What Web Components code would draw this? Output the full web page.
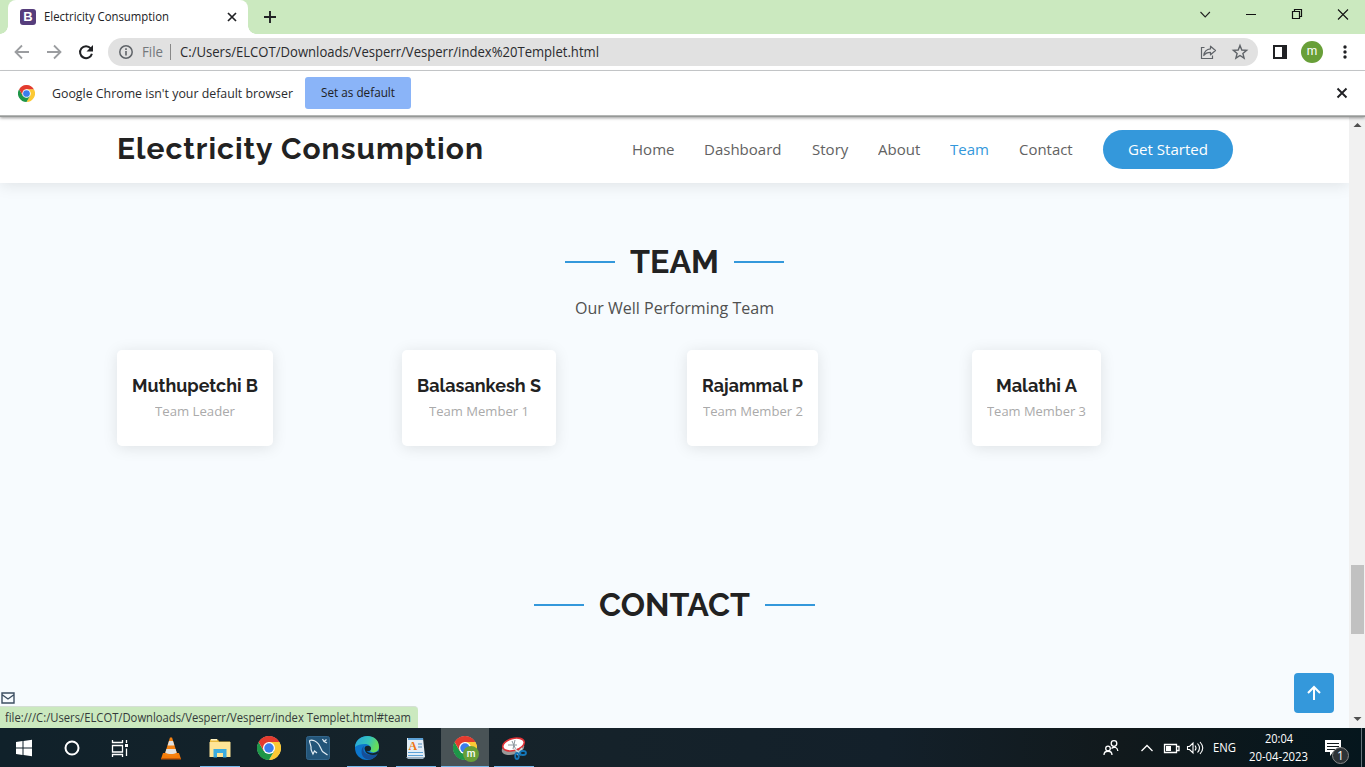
<!DOCTYPE html>
<html lang="en">
<head>
<meta charset="utf-8">
<title>Electricity Consumption</title>
<style>
html,body{margin:0;height:100%;overflow:hidden}
body{font-family:"Open Sans","Noto Sans",sans-serif;background:#f7fbfe}
</style>
</head>
<body>
<desktop-screen></desktop-screen>
<script>
const define = (name, html, ready) => {
  const t = document.createElement('template');
  t.innerHTML = html;
  customElements.define(name, class extends HTMLElement {
    constructor() {
      super();
      this.attachShadow({mode: 'open'}).appendChild(t.content.cloneNode(true));
    }
    connectedCallback() { if (ready) ready(this, this.shadowRoot); }
  });
};

/* A single line of text set to an exact measure. */
define('fit-text', `<style>
:host{display:block;flex:none;white-space:nowrap}
span{display:inline-block;transform-origin:0 50%;vertical-align:top}
</style><span><slot></slot></span>`, (el, root) => {
  const w = parseFloat(el.getAttribute('w'));
  el.style.width = w + 'px';
  const s = root.querySelector('span');
  s.style.transform = 'none';
  const n = s.getBoundingClientRect().width;
  if (n) s.style.transform = `scaleX(${w / n})`;
});

define('chrome-logo', `<style>:host{display:block;flex:none}svg{display:block;width:100%;height:100%}</style>
<svg viewBox="0 0 48 48">
<circle cx="24" cy="24" r="23.5" fill="#fff"/>
<path d="M34.4 30L24 48A24 24 0 0 0 44.8 12H24z" fill="#fcc934"/>
<path d="M13.6 30L3.2 12A24 24 0 0 0 24 48L34.4 30z" fill="#1e9648"/>
<path d="M24 12H44.8A24 24 0 0 0 3.2 12L13.6 30z" fill="#e33b2e"/>
<circle cx="24" cy="24" r="12" fill="#fff"/><circle cx="24" cy="24" r="9.5" fill="#3b7ded"/></svg>`);

define('tab-strip', `<style>
:host{display:flex;height:34px;background:#cbe9bf;align-items:stretch;color:#202124}
.tab{position:relative;box-sizing:border-box;margin-left:8px;width:240px;background:#fff;border-radius:8px 8px 0 0;display:flex;align-items:center;padding:0 10px 0 12px}
.tab:before,.tab:after{content:"";position:absolute;bottom:0;width:8px;height:8px}
.tab:before{left:-8px;background:radial-gradient(circle at 0 0,transparent 7.5px,#fff 8px)}
.tab:after{right:-8px;background:radial-gradient(circle at 100% 0,transparent 7.5px,#fff 8px)}
.fav{width:16px;height:16px;border-radius:3px;background:#563d7c;color:#fff;font:bold 13px/16px "Liberation Sans",sans-serif;text-align:center;margin-right:8px}
fit-text{font-size:12px;line-height:16px}
.x{margin-left:auto;display:block}
.plus{align-self:center;margin-left:15px}
svg{flex:none;display:block}
</style>
<div class="tab"><div class="fav">B</div><fit-text w="125">Electricity Consumption</fit-text>
<svg class="x" width="12" height="12" viewBox="0 0 12 12"><path d="M2 2l8 8M10 2l-8 8" stroke="#202124" stroke-width="1.7"/></svg></div>
<svg class="plus" width="14" height="14" viewBox="0 0 14 14"><path d="M7 1v12M1 7h12" stroke="#202124" stroke-width="1.9"/></svg>
<svg style="margin-left:auto" width="165" height="28" viewBox="1200 0 165 28"><path d="M1200.5 12l4.7 5 4.7-5" fill="none" stroke="#222" stroke-width="1.1"/><path d="M1246 14.5h10" stroke="#111" stroke-width="1"/><path d="M1292.5 11.5h7v7h-7zM1294.5 11.500v-2h7v7h-2" fill="none" stroke="#111" stroke-width="1.2"/><path d="M1338 9.500l10 10M1348 9.500l-10 10" stroke="#111" stroke-width="1.1"/></svg>`);

define('tool-bar', `<style>
:host{display:flex;height:36px;background:#fff;border-bottom:1px solid #c6c8ca;align-items:center;box-sizing:content-box}
svg{flex:none;display:block}
.omni{box-sizing:border-box;width:1150px;height:28px;border-radius:14px;background:#e1e1e1;display:flex;align-items:center;padding:0 8px 0 10px}
fit-text{font-size:14px;line-height:18px;color:#2a2b2e}
.file{color:#73777b;margin-left:8px}
.bar{width:1px;height:16px;background:#888;margin:0 9px 0 7px}
.share{margin-left:auto}
.me{width:22px;height:22px;border-radius:50%;background:#689f38;color:#fff;font-size:12px;line-height:21px;text-align:center;margin-left:14px;font-family:Roboto,sans-serif}
</style>
<svg width="108" height="36" viewBox="0 34 108 36" fill="none"><path d="M29 52H16M22 45.500l-6.500 6.500 6.500 6.500M47 52h13M54 45.500l6.500 6.500-6.500 6.500" stroke="#9b9da0" stroke-width="1.8"/><path d="M90.700 48.300a6 6 0 1 0 1.200 5.400" stroke="#202124" stroke-width="2"/><path d="M93 45v6.500h-6.500z" fill="#202124"/></svg>
<div class="omni"><svg width="16" height="16" viewBox="0 0 16 16"><circle cx="8" cy="8" r="6.200" fill="none" stroke="#5f6368" stroke-width="1.500"/><path d="M8 7v4.500M8 4.300v1.600" stroke="#5f6368" stroke-width="1.600"/></svg>
<fit-text class="file" w="21">File</fit-text><div class="bar"></div><fit-text w="419">C:/Users/ELCOT/Downloads/Vesperr/Vesperr/index%20Templet.html</fit-text>
<svg class="share" width="50" height="20" viewBox="1200 42 50 20" fill="none" stroke="#5f6368"><path d="M1204.500 47.500h-3v11h11v-3" stroke-width="1.200"/><path d="M1210.500 46.200l5 4.300-5 4.300v-2.500c-3.500 0-5.300 1-6.700 3.200.4-4 2.700-6.300 6.700-6.700z" stroke-width="1.200" stroke-linejoin="round"/><path d="M1240 45.500l1.800 4.500 4.800.3-3.700 3.100 1.200 4.700-4.100-2.600-4.100 2.600 1.200-4.700-3.700-3.100 4.800-.3z" stroke-width="1.400"/></svg></div>
<svg style="margin-left:15px" width="14" height="14" viewBox="0 0 14 14"><path d="M1 1h12v12H1z" fill="#fff" stroke="#202124" stroke-width="2"/><path d="M9 1h4v12H9z" fill="#202124"/></svg>
<div class="me">m</div>
<svg style="margin-left:19px" width="6" height="16" viewBox="0 0 6 16" fill="#202124"><circle cx="3" cy="3" r="1.700"/><circle cx="3" cy="8" r="1.700"/><circle cx="3" cy="13" r="1.700"/></svg>`);

define('info-bar', `<style>
:host{display:flex;height:44px;background:#fff;align-items:center;border-bottom:1px solid #b4b6b5;position:relative;z-index:5;box-shadow:0 1px 0 #969997,0 2px 3px rgba(0,0,0,.4)}
chrome-logo{width:17px;height:17px;margin:0 17.500px 0 17.500px}
fit-text{font-size:13px;line-height:18px;color:#2a2b2e}
button{margin:0 0 0 12px;padding:0 16px;border:0;width:106px;height:32px;border-radius:3px;background:#8ab4f8;font:500 12px/18px "Open Sans",sans-serif}
button fit-text{font-size:12px;color:#202124}
svg{margin:0 17px 0 auto;display:block}
</style><chrome-logo></chrome-logo><fit-text w="241">Google Chrome isn't your default browser</fit-text><button><fit-text w="74">Set as default</fit-text></button>
<svg width="12" height="12" viewBox="0 0 12 12"><path d="M1.500 1.500l9 9M10.500 1.500l-9 9" stroke="#202124" stroke-width="1.900"/></svg>`);

define('nav-link', `<style>:host{display:block;font-size:15px;line-height:21px;color:#626262}:host([active]){color:#3498db}</style><slot></slot>`);

define('site-header', `<style>
:host{display:flex;height:67px;box-sizing:border-box;background:#fff;align-items:center;padding:0 116px 0 117px;box-shadow:0 2px 15px rgba(0,0,0,.1);position:relative;z-index:2}
.name{font:700 30px/36px Raleway,Lato,sans-serif;color:#222;margin-top:-2px;letter-spacing:1px}
nav{display:flex;gap:30px;margin-left:auto;align-items:center}
.cta{box-sizing:border-box;width:130px;height:39px;border-radius:20px;background:#3498db;color:#fff;font-size:15px;line-height:21px;padding:9px 25px}
</style><fit-text class="name" w="367">Electricity Consumption</fit-text>
<nav><nav-link><fit-text w="42.500">Home</fit-text></nav-link><nav-link><fit-text w="77.500">Dashboard</fit-text></nav-link><nav-link><fit-text w="36.300">Story</fit-text></nav-link><nav-link><fit-text w="42.300">About</fit-text></nav-link><nav-link active><fit-text w="39">Team</fit-text></nav-link><nav-link><fit-text w="53.700">Contact</fit-text></nav-link><div class="cta"><fit-text w="80">Get Started</fit-text></div></nav>`);

define('section-title', `<style>
:host{display:flex;justify-content:center;align-items:center;gap:15px;font:700 32px/38px Raleway,Lato,sans-serif;color:#222;height:38px}
i{width:50px;height:2px;background:#3498db}
</style><i></i><slot></slot><i></i>`);

define('member-card', `<style>
:host{display:flex;flex-direction:column;align-items:center;justify-self:start;box-sizing:border-box;height:96px;background:#fff;border-radius:5px;box-shadow:0 2px 15px rgba(0,0,0,.1);padding:25px 15px 0}
::slotted([slot=name]){font:700 18px/22px Raleway,Lato,sans-serif;color:#222}
::slotted([slot=role]){font-size:13px;line-height:20px;color:#aaa;margin-top:4px}
</style><slot name="name"></slot><slot name="role"></slot>`);

define('page-scrollbar', `<style>
:host{display:flex;flex-direction:column;width:16px;background:#f1f1f1;align-items:center;position:relative;z-index:3}
svg{display:block}.thumb{width:13px;height:69px;background:#c1c1c1;margin:432px 0 auto 1px}
</style><svg width="16" height="17" viewBox="0 0 16 17"><path d="M4.500 11h8L8.500 7z" fill="#505050"/></svg><div class="thumb"></div><svg width="16" height="17" viewBox="0 0 16 17"><path d="M4.500 6h8l-4 4z" fill="#505050"/></svg>`);

define('web-page', `<style>
:host{display:flex;height:612px;position:relative;background:#f7fbfe}
main{width:1349px;background:#f7fbfe}
.team{margin-top:60px}
.sub{font-size:16px;line-height:24px;color:#505050;margin:15px auto 0}
.grid{display:grid;grid-template-columns:repeat(4,285px);margin:30px 0 0 117px}
.contact{margin-top:140px}
.top{position:absolute;left:1294px;top:557px;width:40px;height:40px;border-radius:4px;background:#3498db}
.mail{position:absolute;left:1px;top:576px}
.status{position:absolute;left:0;top:590px;box-sizing:border-box;width:418px;height:22px;background:#cbe9bf;border-top:1px solid #d5dfd5;border-radius:0 4px 0 0;padding:2px 5px;font-size:12px;line-height:18px;color:#34393a}
svg{display:block}
</style><main><site-header></site-header>
<section-title class="team"><fit-text w="89">TEAM</fit-text></section-title>
<fit-text class="sub" w="199">Our Well Performing Team</fit-text>
<div class="grid">
<member-card><fit-text slot="name" w="126">Muthupetchi B</fit-text><fit-text slot="role" w="80">Team Leader</fit-text></member-card>
<member-card><fit-text slot="name" w="124">Balasankesh S</fit-text><fit-text slot="role" w="100">Team Member 1</fit-text></member-card>
<member-card><fit-text slot="name" w="101">Rajammal P</fit-text><fit-text slot="role" w="100">Team Member 2</fit-text></member-card>
<member-card><fit-text slot="name" w="81">Malathi A</fit-text><fit-text slot="role" w="99">Team Member 3</fit-text></member-card>
</div>
<section-title class="contact"><fit-text w="151">CONTACT</fit-text></section-title></main>
<page-scrollbar></page-scrollbar>
<svg class="mail" width="14" height="12" viewBox="0 0 14 12"><path d="M1 1h12v10H1zM1.500 3L7 7l5.500-4" fill="none" stroke="#3d4f62" stroke-width="1.400"/></svg>
<div class="status"><fit-text w="406">file:///C:/Users/ELCOT/Downloads/Vesperr/Vesperr/index Templet.html#team</fit-text></div>
<div class="top"><svg width="40" height="40" viewBox="0 0 40 40"><path d="M20 27V14.500M14 20l6-6 6 6" fill="none" stroke="#fff" stroke-width="2"/></svg></div>`);

define('task-item', `<style>
:host{display:flex;width:48px;height:39px;align-items:center;justify-content:center;flex:none;position:relative;margin-right:1px}
:host([current]){background:#495356}
:host([open]):after{content:"";position:absolute;left:4px;right:4px;bottom:0;height:1.500px;background:#76b9ed}
:host([current]):after{left:0;right:0}
</style><slot></slot>`);

define('task-bar', `<style>
:host{display:flex;height:39px;background:linear-gradient(90deg,#10212a,#16232a 35%,#13202a 65%,#11191c 82%,#05161d);color:#fff}
svg{display:block;flex:none}
chrome-logo{width:24px;height:24px}
.badge{position:absolute;left:22px;top:18px;width:16px;height:16px;border-radius:50%;background:#689f38;font:500 10px/15px Roboto,sans-serif;text-align:center}
.tray{margin-left:auto;display:flex;align-items:center;height:39px}
fit-text{font-size:12px;line-height:18px}
.clock{margin:0 17px 0 13px;width:59px;display:flex;flex-direction:column;align-items:center}
.note{position:relative;width:40px;height:39px}
.n{position:absolute;left:7px;top:19px;width:15px;height:15px;border:1px solid #888;border-radius:50%;background:#2d3337;font-size:12px;line-height:15px;text-align:center}
</style>
<svg width="147" height="39" viewBox="0 728 147 39"><path d="M16 742l6.500-1v6.500H16zM23.500 740.900l8.500-1.200v7.800h-8.500zM16 748.500h6.500v6.500l-6.500-1zM23.500 748.500H32v7.800l-8.500-1.200z" fill="#fff"/><circle cx="72" cy="748" r="6.500" fill="none" stroke="#fff" stroke-width="2"/><path d="M112.500 740v2.500h10V740M112.500 745.500h10v6.500h-10zM112.500 757v-2.500h10v2.500M126.500 740v3M126.500 748.500v7.500" fill="none" stroke="#fff" stroke-width="1.300"/><path d="M125 744h3v3h-3z" fill="#fff"/></svg>
<task-item><svg width="24" height="26" viewBox="0 0 24 26"><path d="M4 18h16l2 6H2z" fill="#f57c08"/><path d="M11 2.500h2l5.500 17.500c-3 2-10 2-13 0z" fill="#f58212"/><path d="M10 6h4l1.400 4.500H8.600zM7.400 14h9.200l1.100 3.700c-3 1.800-8.400 1.800-11.400 0z" fill="#e2e2e2"/><path d="M2 23h20v1.500H2z" fill="#c85904"/></svg></task-item>
<task-item open><svg width="24" height="24" viewBox="0 0 24 24"><path d="M2 3.500h8l1 2h11v15H2z" fill="#e9bb3f"/><path d="M3 3h6v1.500H3z" fill="#fff3c4"/><path d="M1.500 6h21v15h-21z" fill="#ffe596"/><path d="M5.500 13h13v8.500h-3.500v-4.500h-6v4.500H5.500z" fill="#3bacdf"/></svg></task-item>
<task-item><chrome-logo></chrome-logo></task-item>
<task-item><svg width="24" height="24" viewBox="0 0 24 24"><rect x=".5" y=".5" width="23" height="23" rx="2" fill="#235579" stroke="#32658a"/><path d="M3.500 4.500c3-1.500 7 1 9 3.500 2 3 3 6 4 7.500l5 3.500M3.500 4.500c0 3 2 5 1.500 8 0 2 1 3 2 5.500l1.500-3 2.500 2M16.500 3l1.500 2.500 3 1.500M18 5.500l2.500-2" fill="none" stroke="#e2edf4" stroke-width="1.200"/></svg></task-item>
<task-item open><svg width="24" height="24" viewBox="0 0 24 24"><defs><linearGradient id="a" x2="1" y2=".3"><stop stop-color="#27a4df"/><stop offset=".6" stop-color="#36c4ba"/><stop offset="1" stop-color="#68de58"/></linearGradient></defs><circle cx="12" cy="12" r="12" fill="#0d76cc"/><path d="M0 11C1-3 24-4 24 11c0 5-6 7-9 4 2-3 0-7-5-7-4 0-8 1-10 3z" fill="url(#a)"/><path d="M9 10c-3 7 4 11 13.500 8C18 26 7 25 6.500 16c0-3 1-5 2.500-6z" fill="#164f98"/><path d="M11 10.500c-1.500 2 0 5 3 6 3 1.300 7 .6 9.500-1.800l-.8 3.300c-5 2-10 .5-12-2-1-2-.7-4 .3-5.500z" fill="#14242b"/><ellipse cx="12.800" cy="12.500" rx="3.200" ry="2.800" fill="#14242b"/></svg></task-item>
<task-item open><svg width="20" height="24" viewBox="0 0 20 24"><path d="M1 2h16l2 19H1z" fill="#e3eef7"/><path d="M2 2h15v2H2zM2 16h15v1H2zM2 19h15v1H2z" fill="#5da2d7"/><path d="M12 8h4M12 11h4" stroke="#538dbd"/><path d="M0 21h19l-2 2H2z" fill="#9eb2c2"/><text x="2.500" y="14" font-family="Liberation Serif" font-weight="bold" font-size="12" fill="#ef7412">A</text></svg></task-item>
<task-item current open><chrome-logo></chrome-logo><div class="badge">m</div></task-item>
<task-item open><svg width="28" height="26" viewBox="0 0 28 26"><ellipse cx="13" cy="13.500" rx="11.500" ry="6" transform="rotate(-15 13 13.500)" fill="#999"/><ellipse cx="13.500" cy="9.500" rx="11" ry="6" transform="rotate(-15 13.500 9.500)" fill="#fff" stroke="#df3136" stroke-width="1.600"/><path d="M12 6l4 9M15 5l-2 9M8 10h9" stroke="#8b969d"/><path d="M15 14l6 6M22 13l-5 7" stroke="#ccdce2" stroke-width="1.500"/><ellipse cx="17" cy="21" rx="1.800" ry="3" fill="none" stroke="#1477ba" stroke-width="1.800"/><ellipse cx="23" cy="18" rx="3" ry="2" fill="none" stroke="#1477ba" stroke-width="1.800"/></svg></task-item>
<div class="tray"><svg width="110" height="39" viewBox="1100 728 110 39" fill="none" stroke="#fff" stroke-width="1.300"><circle cx="1108" cy="748.500" r="2.300"/><path d="M1104 755c0-5 8-5 8 0"/><circle cx="1114" cy="743.500" r="2.800"/><path d="M1111.500 748.500c3-2.500 6-1 6.300 2.500M1141.500 751l5.500-5.500 5.500 5.500"/><path d="M1164.500 744.500h12v8h-12zM1177 746.500h2v4h-2"/><path d="M1166 746h5v5h-5z" fill="#fff" stroke="none"/><path d="M1187.500 746.500h2l3.500-3.500v10l-3.500-3.500h-2zM1195 745.500q2 2.500 0 5M1197.500 743.500q4 4.500 0 9M1200 742q5.500 6 0 12" stroke-width="1.100"/></svg>
<fit-text style="margin-left:3px" w="23">ENG</fit-text><div class="clock"><fit-text w="28">20:04</fit-text><fit-text w="59">20-04-2023</fit-text></div>
<div class="note"><svg width="40" height="39" viewBox="1325 728 40 39"><path d="M1325 740h16v12h-8l-3 4v-4h-5z" fill="#fff"/><path d="M1327 743.500h12M1327 746.500h12M1327 749.500h8" stroke="#11191c"/><path d="M1361.500 728v39" stroke="#65737a"/></svg><div class="n">1</div></div></div>`);

define('desktop-screen', `<style>:host{display:grid;grid-template-rows:34px 37px 45px 612px 39px;width:1365px;height:767px;overflow:hidden}</style>
<tab-strip></tab-strip><tool-bar></tool-bar><info-bar></info-bar><web-page></web-page><task-bar></task-bar>`);
</script>
</body>
</html>
